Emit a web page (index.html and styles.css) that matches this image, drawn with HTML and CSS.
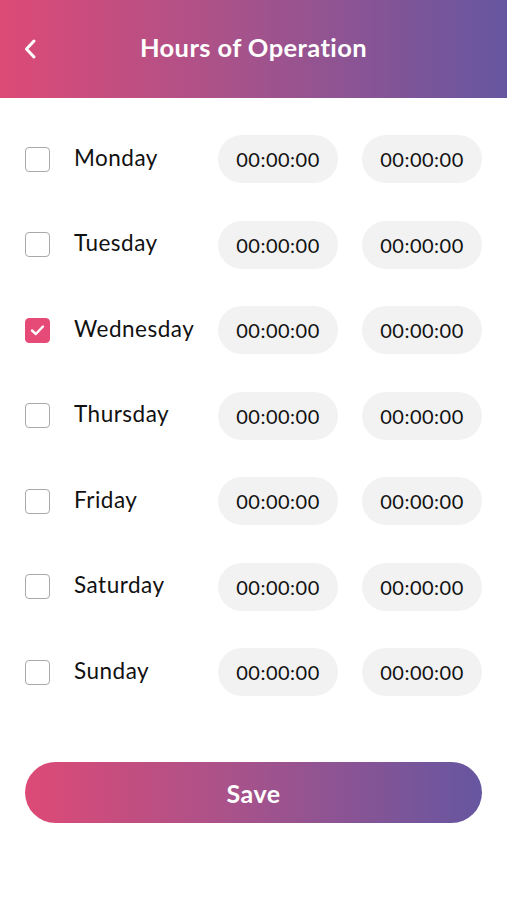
FILE: index.html
```html
<!DOCTYPE html>
<html>
<head>
<meta charset="utf-8">
<link rel="stylesheet" href="styles.css">
</head>
<body>
<header class="header">
  <button class="back" aria-label="Back">
    <svg width="14" height="22" viewBox="0 0 14 22"><path d="M11 3 L3.5 11 L11 19" fill="none" stroke="#fff" stroke-width="3" stroke-linecap="round" stroke-linejoin="round"/></svg>
  </button>
  <h1 class="title">Hours of Operation</h1>
</header>
<main class="list">
  <div class="row"><span class="check"></span><span class="day">Monday</span><span class="pill">00:00:00</span><span class="pill">00:00:00</span></div>
  <div class="row"><span class="check"></span><span class="day">Tuesday</span><span class="pill">00:00:00</span><span class="pill">00:00:00</span></div>
  <div class="row"><span class="check checked"><svg width="15" height="12" viewBox="0 0 15 12"><path d="M2 6.5 L5.8 10 L13 2.5" fill="none" stroke="#fff" stroke-width="2.4" stroke-linecap="round" stroke-linejoin="round"/></svg></span><span class="day">Wednesday</span><span class="pill">00:00:00</span><span class="pill">00:00:00</span></div>
  <div class="row"><span class="check"></span><span class="day">Thursday</span><span class="pill">00:00:00</span><span class="pill">00:00:00</span></div>
  <div class="row"><span class="check"></span><span class="day">Friday</span><span class="pill">00:00:00</span><span class="pill">00:00:00</span></div>
  <div class="row"><span class="check"></span><span class="day">Saturday</span><span class="pill">00:00:00</span><span class="pill">00:00:00</span></div>
  <div class="row"><span class="check"></span><span class="day">Sunday</span><span class="pill">00:00:00</span><span class="pill">00:00:00</span></div>
</main>
<div class="footer"><button class="save">Save</button></div>
</body>
</html>
```
FILE: styles.css
```css
* { box-sizing: border-box; }
body { margin: 0; font-family: "Lato", "Noto Sans", sans-serif; background: #fff; color: #111; width: 507px; }
.header {
  height: 98px;
  background: linear-gradient(90deg, #dd4a76 0%, #a9528a 45%, #6656a0 100%);
  display: flex; align-items: center; justify-content: center;
  position: relative;
}
.back { position: absolute; left: 23px; top: 38px; background: none; border: 0; padding: 0; width: 14px; height: 22px; }
.back svg { display: block; }
.title { margin: 0; color: #fff; font-size: 25.5px; font-weight: 700; letter-spacing: 0.4px; position: relative; top: -2px; }
.list { padding: 37px 25px 0; display: flex; flex-direction: column; gap: 37.5px; }
.row { height: 48px; display: flex; align-items: center; }
.check { width: 25px; height: 25px; border: 1.5px solid #a9a9a9; border-radius: 4px; flex: none; display: flex; align-items: center; justify-content: center; }
.check.checked { background: #e64b78; border-color: #e64b78; }
.day { margin-left: 24px; width: 144px; font-size: 22.5px; font-weight: 400; color: #111; position: relative; top: -2px; letter-spacing: 0.5px; }
.pill { width: 120px; height: 48px; border-radius: 24px; background: #f2f2f2; display: flex; align-items: center; justify-content: center; font-size: 20px; color: #111; letter-spacing: 0.5px; }
.pill + .pill { margin-left: 24px; }
.footer { padding: 66px 25px 0; }
.save { display: block; width: 457px; height: 61px; border: 0; border-radius: 31px; background: linear-gradient(90deg, #dd4a76 0%, #a9528a 45%, #6656a0 100%); color: #fff; font-family: "Lato", sans-serif; font-size: 25px; font-weight: 700; letter-spacing: 0.5px; }
```
